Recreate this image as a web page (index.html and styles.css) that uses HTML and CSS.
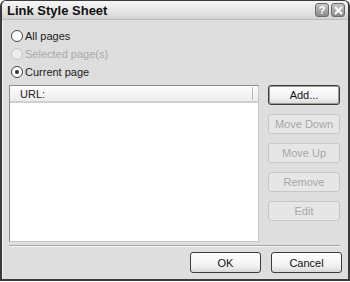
FILE: index.html
```html
<!DOCTYPE html>
<html lang="en">
<head>
    <meta charset="UTF-8">
    <title>Link Style Sheet</title>
    <link rel="stylesheet" href="styles.css">
</head>
<body>
    <div class="window">
        <div class="titlebar">
            <span class="title">Link Style Sheet</span>
            <div class="caption-btns">
                <span class="caption-btn">?</span>
                <span class="caption-btn">
                    <svg width="9" height="9" viewBox="0 0 9 9"><path d="M1 1 L8 8 M8 1 L1 8" stroke="#fff" stroke-width="2"/></svg>
                </span>
            </div>
        </div>

        <div class="content">
            <div class="radios">
                <label class="radio"><span class="dot"></span>All pages</label>
                <label class="radio disabled"><span class="dot"></span>Selected page(s)</label>
                <label class="radio"><span class="dot checked"></span>Current page</label>
            </div>

            <div class="main">
                <div class="listbox">
                    <div class="list-header">
                        <span>URL:</span>
                        <span class="col-sep"></span>
                    </div>
                </div>
                <div class="side-btns">
                    <button class="btn default">Add...</button>
                    <button class="btn" disabled>Move Down</button>
                    <button class="btn" disabled>Move Up</button>
                    <button class="btn" disabled>Remove</button>
                    <button class="btn" disabled>Edit</button>
                </div>
            </div>

            <div class="separator"></div>

            <div class="footer">
                <button class="btn wide">OK</button>
                <button class="btn wide">Cancel</button>
            </div>
        </div>
    </div>
</body>
</html>
```

FILE: styles.css
```css
* {
    margin: 0;
    padding: 0;
    box-sizing: border-box;
}

body {
    background: #ffffff;
    font-family: 'Liberation Sans', Arial, sans-serif;
    font-size: 11px;
    color: #1a1a1a;
}

.window {
    width: 350px;
    height: 281px;
    border: 2px solid #3a3a3a;
    border-top: 1px solid #3a3a3a;
    border-radius: 6px 6px 0 0;
    background: #dedede;
    display: flex;
    flex-direction: column;
    overflow: hidden;
}

.titlebar {
    height: 19px;
    display: flex;
    align-items: center;
    justify-content: space-between;
    padding: 0 3px 0 5px;
    background: linear-gradient(#f6f6f6, #e4e4e4 60%, #d2d2d2);
    border-bottom: 1px solid #bcbcbc;
}

.title {
    font-size: 13px;
    font-weight: bold;
    color: #111;
    padding-top: 1px;
}

.caption-btns {
    display: flex;
    gap: 2px;
}

.caption-btn {
    width: 14px;
    height: 14px;
    border: 1px solid #6a6a6a;
    border-radius: 3px;
    background: linear-gradient(#c8c8c8, #8a8a8a);
    color: #fff;
    font-weight: bold;
    font-size: 11px;
    display: flex;
    align-items: center;
    justify-content: center;
}

.content {
    flex: 1;
    padding: 7px 6px 0 7px;
    box-shadow: inset 1px 0 0 #f4f4f4;
}

.radios {
    display: flex;
    flex-direction: column;
}

.radio {
    height: 18px;
    display: flex;
    align-items: center;
    gap: 2px;
    padding-left: 2px;
}

.radio.disabled {
    color: #a9a9a9;
}

.dot {
    width: 12px;
    height: 12px;
    border: 1px solid #444;
    border-radius: 50%;
    background: #fff;
    display: flex;
    align-items: center;
    justify-content: center;
}

.radio.disabled .dot {
    border-color: #c4c4c4;
    background: #ececec;
}

.dot.checked::after {
    content: "";
    width: 4px;
    height: 4px;
    border-radius: 50%;
    background: #333;
}

.main {
    display: flex;
    gap: 9px;
    margin-top: 4px;
    height: 157px;
}

.listbox {
    width: 250px;
    background: #fff;
    border: 1px solid #8c8c8c;
    border-right-color: #c8c8c8;
    border-bottom-color: #c8c8c8;
}

.list-header {
    height: 17px;
    display: flex;
    align-items: center;
    justify-content: space-between;
    padding: 0 5px 0 10px;
    background: linear-gradient(#fdfdfd, #ececec);
    border-bottom: 2px solid #cfcfcf;
}

.col-sep {
    width: 1px;
    height: 13px;
    background: #b8b8b8;
}

.side-btns {
    width: 72px;
    display: flex;
    flex-direction: column;
    gap: 9px;
}

.btn {
    height: 20px;
    font-family: inherit;
    font-size: 11px;
    color: #111;
    border: 1px solid #3c3c3c;
    border-radius: 3px;
    background: linear-gradient(#ffffff, #f0f0f0 70%, #d8d8d8);
}

.btn.default {
    box-shadow: inset 0 0 0 1px #9a9a9a;
}

.btn:disabled {
    color: #a6a6a6;
    border-color: #c6c6c6;
    background: #e6e6e6;
}

.separator {
    height: 2px;
    margin-top: 3px;
    margin-right: 2px;
    border-top: 1px solid #a4a4a4;
    border-bottom: 1px solid #f6f6f6;
}

.footer {
    display: flex;
    justify-content: flex-end;
    gap: 10px;
    margin-top: 5px;
}

.btn.wide {
    width: 71px;
    height: 21px;
}
```
